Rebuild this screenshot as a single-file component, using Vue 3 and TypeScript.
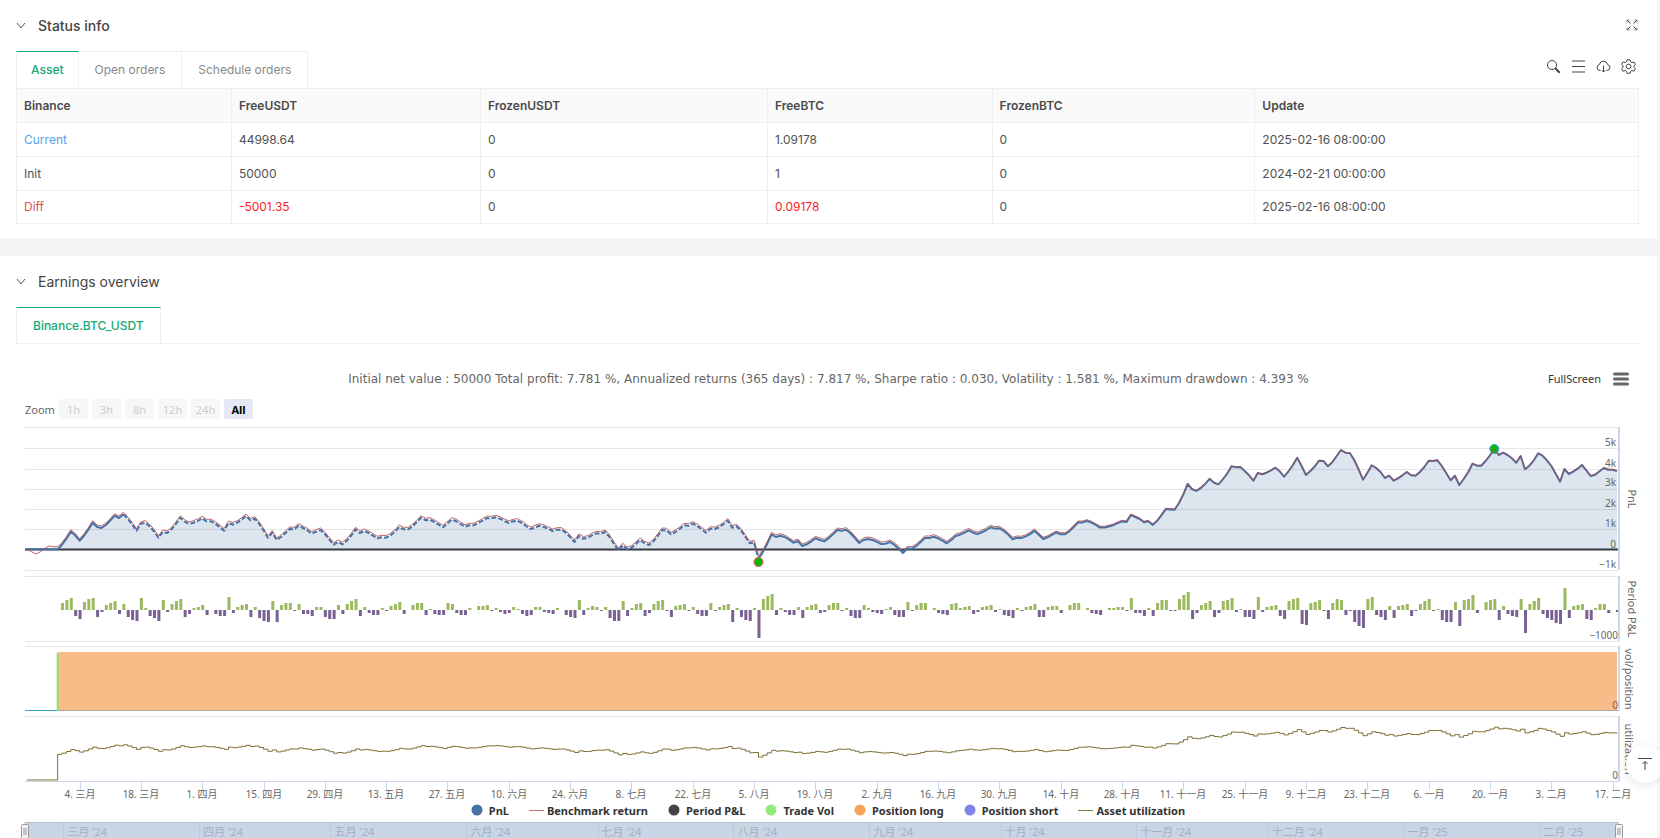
<script setup lang="ts">
import { computed, onBeforeUnmount, onMounted, ref } from 'vue'

interface Asset {
  name: string
  tone: string
  values: string[]
  changed: boolean
  update: string
}

const tabs = ['Asset', 'Open orders', 'Schedule orders']
const columns = ['Binance', 'FreeUSDT', 'FrozenUSDT', 'FreeBTC', 'FrozenBTC', 'Update']
const assets: Asset[] = [
  { name: 'Current', tone: 'current', values: ['44998.64', '0', '1.09178', '0'], changed: false, update: '2025-02-16 08:00:00' },
  { name: 'Init', tone: 'init', values: ['50000', '0', '1', '0'], changed: false, update: '2024-02-21 00:00:00' },
  { name: 'Diff', tone: 'diff', values: ['-5001.35', '0', '0.09178', '0'], changed: true, update: '2025-02-16 08:00:00' },
]

const ranges = ['1h', '3h', '8h', '12h', '24h', 'All']
const activeRange = ref('All')

const legend = [
  { label: 'PnL', shape: 'dot', color: '#4572a7' },
  { label: 'Benchmark return', shape: 'line', color: '#c07877' },
  { label: 'Period P&L', shape: 'dot', color: '#434348' },
  { label: 'Trade Vol', shape: 'dot', color: '#90ed7d' },
  { label: 'Position long', shape: 'dot', color: '#f7a35c' },
  { label: 'Position short', shape: 'dot', color: '#8085e9' },
  { label: 'Asset utilization', shape: 'line', color: '#857945' },
]

const dateLabels = [
  '4. 三月', '18. 三月', '1. 四月', '15. 四月', '29. 四月', '13. 五月', '27. 五月', '10. 六月', '24. 六月',
  '8. 七月', '22. 七月', '5. 八月', '19. 八月', '2. 九月', '16. 九月', '30. 九月', '14. 十月', '28. 十月',
  '11. 十一月', '25. 十一月', '9. 十二月', '23. 十二月', '6. 一月', '20. 一月', '3. 二月', '17. 二月',
]
const months = [
  { day: 9, label: "三月 '24" }, { day: 40, label: "四月 '24" }, { day: 70, label: "五月 '24" },
  { day: 101, label: "六月 '24" }, { day: 131, label: "七月 '24" }, { day: 162, label: "八月 '24" },
  { day: 193, label: "九月 '24" }, { day: 223, label: "十月 '24" }, { day: 254, label: "十一月 '24" },
  { day: 284, label: "十二月 '24" }, { day: 315, label: "一月 '25" }, { day: 346, label: "二月 '25" },
]

// Daily benchmark depth below the top of the plot, three units per pixel.
const levels: number[] = [
  388, 395, 402, 396, 386, 378, 380, 380, 368, 350, 329, 340, 356, 342, 323, 302, 315, 318, 309, 296,
  281, 288, 277, 290, 307, 326, 305, 302, 313, 328, 347, 330, 333, 322, 306, 287, 299, 306, 302, 297,
  289, 298, 298, 305, 315, 326, 303, 308, 302, 293, 282, 295, 290, 305, 325, 347, 332, 354, 345, 333,
  321, 322, 311, 318, 325, 335, 329, 324, 336, 352, 368, 360, 367, 356, 341, 322, 333, 327, 333, 341,
  349, 346, 347, 340, 329, 315,
  322, 322, 313, 300, 287, 295, 293, 300, 308, 316, 304, 293, 298, 306, 314, 310, 310, 303, 296, 288,
  289, 286, 290, 297, 303, 298, 296, 303, 313, 321, 316, 311, 315, 320, 327, 323, 323, 332, 345, 360,
  342, 350, 347, 340, 334, 335, 330, 345, 365, 385, 370, 381, 377, 366, 354, 364, 369, 358, 342, 324,
  325, 337, 330, 321, 310, 311, 305, 312, 322, 332, 320, 321, 316, 307, 296, 317, 313, 326, 344, 364,
  361, 410, 390, 365, 337, 345, 341, 345, 353, 362, 357,
  372, 367, 359, 349, 354, 358, 349, 337, 324, 326, 323, 334, 348, 363, 354, 351, 354, 359, 366, 365,
  360, 368, 380, 393, 379, 380, 372, 360, 348, 348, 344, 349, 356, 364, 354, 342, 338, 332, 325, 332,
  336, 331, 324, 316, 320, 319, 327, 338, 352, 348, 349, 344, 337, 327, 339, 352, 347, 340, 333, 338,
  338, 329, 316, 303, 303, 299, 304, 311, 319, 319, 316, 312, 306, 301, 303, 282, 288, 294, 304, 301,
  312, 300, 283, 265, 266, 267, 247, 221, 190, 206, 211, 202, 190, 175, 187, 192,
  177, 160, 138, 141, 140, 152, 165, 181, 158, 162, 157, 150, 142, 153, 169, 153, 134, 112, 137, 164,
  152, 138, 121, 122, 138, 126, 107, 89, 97, 98, 119, 147, 178, 158, 135, 143, 155, 173, 166, 181,
  174, 165, 155, 165, 166, 155, 140, 121, 122, 120, 137, 158, 180, 166, 194, 176, 156, 130, 136, 136,
  122, 105, 86, 104, 97, 104, 114, 127, 107, 147, 136, 120, 99, 106, 120, 137, 160, 184, 146, 161,
  154, 145, 134, 150, 167, 163, 153, 143, 148, 148, 152,
]
const ZERO = 388
const ENTRY_DAY = 7
const LAST_DAY = levels.length - 1
const lowDay = levels.indexOf(Math.max(...levels))
const highDay = levels.indexOf(Math.min(...levels.slice(320)), 320)

const chart = ref<HTMLElement | null>(null)
const width = ref(1657)
let observer: ResizeObserver | undefined
onMounted(() => {
  observer = new ResizeObserver(([entry]) => { width.value = entry.contentRect.width })
  if (chart.value) observer.observe(chart.value)
})
onBeforeUnmount(() => observer?.disconnect())

const left = 25
const right = computed(() => width.value - 38)
const xAt = (day: number): number => left + 2 + ((right.value - left - 4) * day) / LAST_DAY
const strategy = (day: number): number => {
  if (day <= ENTRY_DAY) return ZERO
  const lag = day < 220 ? 6 : Math.max(1, 6 - (day - 220) / 11)
  return levels[day] + lag
}
const trace = (from: number, to: number, value: (day: number) => number): string => {
  let path = ''
  for (let day = from; day <= to; day++) {
    path += `${day === from ? 'M' : 'L'}${xAt(day).toFixed(1)} ${(value(day) / 3).toFixed(1)}`
  }
  return path
}
const benchmarkPath = computed(() => trace(0, LAST_DAY, (d) => levels[d]))
const pnlSolid = computed(() => trace(0, 22, strategy) + trace(lowDay, LAST_DAY, strategy))
const pnlDashed = computed(() => trace(22, lowDay, strategy))
const areaPath = computed(() => `${trace(ENTRY_DAY, LAST_DAY, strategy)}V129H${xAt(ENTRY_DAY)}Z`)
const bars = computed(() =>
  levels.slice(ENTRY_DAY + 1).map((level, i) => {
    const day = i + ENTRY_DAY + 1
    const size = Math.round(((levels[day - 1] - level) * 17) / 30)
    return { x: xAt(day) - 1, y: size > 0 ? 190 - size : 190, height: Math.abs(size), gain: size > 0 }
  }),
)
const utilizationPath = computed(() => {
  let path = `M${xAt(0)} 360H${xAt(ENTRY_DAY)}`
  for (let day = ENTRY_DAY; day <= LAST_DAY; day++) {
    path += `V${((898 + 0.276 * levels[day]) / 3).toFixed(1)}H${xAt(Math.min(day + 1, LAST_DAY)).toFixed(1)}`
  }
  return path
})
const ticks = computed(() => dateLabels.map((label, i) => ({ label, x: Math.round(xAt(12 + i * 14)) })))
const gridRows = [7, 28, 49, 69, 89, 109, 150]
const pnlScale = [
  { label: '5k', y: 26 }, { label: '4k', y: 47 }, { label: '3k', y: 66 }, { label: '2k', y: 87 },
  { label: '1k', y: 107 }, { label: '0', y: 128 }, { label: '−1k', y: 148 },
]
const frames = [{ y: 7, h: 143 }, { y: 156, h: 65 }, { y: 226, h: 65 }, { y: 296, h: 65 }]
const axisTitles = [
  { label: 'PnL', x: 9, y: 79 }, { label: 'Period P&L', x: 9, y: 189 },
  { label: 'vol/position', x: 6, y: 259 }, { label: 'utilization', x: 6, y: 329 },
]
</script>

<template>
  <main class="shell">
    <section class="card">
      <header class="card-head">
        <button class="chevron" type="button" aria-label="Collapse status info">
          <svg width="10" height="8" viewBox="0 0 10 8"><path d="M1 1l4 5 4-5" /></svg>
        </button>
        <h2 class="strong">Status info</h2>
        <button class="shrink" type="button" aria-label="Exit full screen">
          <svg width="12" height="12" viewBox="0 0 12 12">
            <path d="M1 1l3.5 3.5M11 1L7.500 4.500M1 11l3.500-3.500M11 11L7.500 7.500" />
            <path d="M1 3.500V1h2.500M8.500 1H11v2.500M1 8.500V11h2.500M8.500 11H11V8.500" class="faint" />
          </svg>
        </button>
      </header>

      <div class="tab-row">
        <nav class="tabs">
          <button v-for="(tab, i) in tabs" :key="tab" type="button" class="tab" :class="{ active: i === 0 }">{{ tab }}</button>
        </nav>
        <div class="tools">
          <button type="button" aria-label="Search">
            <svg width="15" height="15" viewBox="0 0 15 15"><circle cx="6" cy="6" r="4.500" /><path d="M9.300 9.300l4.400 4.400" class="bold" /></svg>
          </button>
          <button type="button" aria-label="Columns">
            <svg width="15" height="15" viewBox="0 0 15 15"><path d="M1 2h13M1 7.500h13M1 13h13" /></svg>
          </button>
          <button type="button" aria-label="Download">
            <svg width="15" height="15" viewBox="0 0 15 15">
              <path d="M4.500 11.500H4A3 3 0 0 1 3.300 5.600a4.300 4.300 0 0 1 8.400 0A3 3 0 0 1 11 11.500h-.5M7.500 6.500v6.500M5.800 11.300l1.700 1.700 1.700-1.700" />
            </svg>
          </button>
          <button type="button" aria-label="Settings">
            <svg width="15" height="15" viewBox="0 0 15 15">
              <path d="M6 .8h3l.5 2 1.400.8 2-.7 1.500 2.600-1.500 1.400v1.300l1.500 1.400-1.500 2.600-2-.7-1.400.8-.5 2H6l-.5-2-1.400-.8-2 .7L.6 9.600l1.500-1.400V6.900L.6 5.500l1.500-2.600 2 .7 1.400-.8z" stroke-linejoin="round" />
              <circle cx="7.500" cy="7.500" r="2.300" />
            </svg>
          </button>
        </div>
      </div>

      <table class="assets">
        <colgroup><col v-for="c in columns" :key="c" :class="`col-${c.toLowerCase()}`" /></colgroup>
        <thead>
          <tr><th v-for="c in columns" :key="c" scope="col">{{ c }}</th></tr>
        </thead>
        <tbody>
          <tr v-for="row in assets" :key="row.name">
            <td :class="row.tone">{{ row.name }}</td>
            <td v-for="(v, i) in row.values" :key="i" :class="{ changed: row.changed && v !== '0' }">{{ v }}</td>
            <td>{{ row.update }}</td>
          </tr>
        </tbody>
      </table>
    </section>

    <section class="card earnings">
      <header class="card-head">
        <button class="chevron" type="button" aria-label="Collapse earnings overview">
          <svg width="10" height="8" viewBox="0 0 10 8"><path d="M1 1l4 5 4-5" /></svg>
        </button>
        <h2>Earnings overview</h2>
      </header>
      <div class="tab-row lined">
        <nav class="tabs"><button type="button" class="tab active">Binance.BTC_USDT</button></nav>
      </div>

      <div ref="chart" class="chart">
        <div class="summary">
          <p>Initial net value : 50000 Total profit: 7.781 %, Annualized returns (365 days) : 7.817 %, Sharpe ratio : 0.030, Volatility : 1.581 %, Maximum drawdown : 4.393 %</p>
          <div class="chart-menu">
            <button type="button">FullScreen</button>
            <button type="button" aria-label="Chart menu">
              <svg width="16" height="14" viewBox="0 0 16 14"><path d="M1.500 2h13M1.500 7h13M1.500 12h13" class="menu" /></svg>
            </button>
          </div>
        </div>
        <div class="ranges">
          <span>Zoom</span>
          <button v-for="r in ranges" :key="r" type="button" :class="{ active: r === activeRange }" :disabled="r !== 'All'" @click="activeRange = r">{{ r }}</button>
        </div>

        <svg class="plot" :width="width" height="380" role="img" aria-label="Earnings chart">
          <g class="grid">
            <path v-for="y in gridRows" :key="y" :d="`M${left} ${y + 0.5}H${right}`" />
            <path v-for="y in [156, 221, 226, 296]" :key="y" :d="`M${left} ${y + 0.5}H${right}`" />
          </g>
          <path class="area" :d="areaPath" />
          <path class="zero" :d="`M${left} 129.500H${right}`" />
          <path class="pnl" :d="pnlSolid" />
          <path class="pnl dashed" :d="pnlDashed" />
          <circle class="low" :cx="xAt(lowDay)" cy="142" r="4.500" />
          <circle class="high" :cx="xAt(highDay)" cy="29" r="4.500" />
          <path class="benchmark" :d="benchmarkPath" />

          <rect v-for="(b, i) in bars" :key="i" :class="b.gain ? 'gain' : 'loss'" :x="b.x" :y="b.y" width="3" :height="b.height" />

          <path class="vol-base" :d="`M${left} 290.500H${right}`" />
          <rect class="long" :x="xAt(ENTRY_DAY)" y="232" :width="xAt(LAST_DAY) - xAt(ENTRY_DAY)" height="59" />
          <path class="long-base" :d="`M${xAt(ENTRY_DAY)} 290.500H${xAt(LAST_DAY)}`" />
          <path class="trade" :d="`M${xAt(ENTRY_DAY)} 233V291`" />

          <path class="axis" :d="`M${left} 361.500H${right}`" />
          <path v-for="f in frames" :key="f.y" class="axis side" :d="`M${right} ${f.y}v${f.h}`" />
          <path class="utilization" :d="utilizationPath" />

          <g class="scale">
            <text v-for="s in pnlScale" :key="s.label" :x="right - 3" :y="s.y">{{ s.label }}</text>
            <text :x="right - 1" y="219">−1000</text>
            <text :x="right - 1" y="289">0</text>
            <text :x="right - 1" y="359">0</text>
          </g>
          <g class="dates">
            <template v-for="t in ticks" :key="t.label">
              <path class="axis" :d="`M${t.x + 0.5} 362v8`" />
              <text :x="t.x" y="378">{{ t.label }}</text>
            </template>
          </g>
          <text v-for="t in axisTitles" :key="t.label" class="axis-title" :transform="`translate(${right + t.x} ${t.y}) rotate(90)`">{{ t.label }}</text>
        </svg>

        <div class="legend">
          <button v-for="l in legend" :key="l.label" type="button">
            <svg width="18" height="12" viewBox="0 0 18 12">
              <circle v-if="l.shape === 'dot'" cx="6" cy="6" r="5.500" :fill="l.color" />
              <path v-else d="M0 6.500h15" :stroke="l.color" />
            </svg>
            <span>{{ l.label }}</span>
          </button>
        </div>

        <svg class="navigator" :width="width" height="40" role="img" aria-label="Date range navigator">
          <rect class="mask" :x="left" y="0" :width="right - left" height="40" />
          <path class="nav-top" :d="`M${left - 1} .5H${right}`" />
          <g v-for="m in months" :key="m.label">
            <path class="nav-grid" :d="`M${Math.round(xAt(m.day - 0.5)) - 0.5} 1V40`" />
            <text :x="xAt(m.day - 0.5) + 3" y="14">{{ m.label }}</text>
          </g>
          <g v-for="x in [left - 4, right - 4]" :key="x" class="handle">
            <rect :x="x + 0.5" y="2.500" width="7" height="14" rx="1" />
            <path :d="`M${x + 3} 6v7M${x + 5} 6v7`" />
          </g>
        </svg>
      </div>
    </section>

    <button class="back-top" type="button" aria-label="Back to top">
      <svg width="14" height="14" viewBox="0 0 14 14"><path d="M0 1.500h14M7 4.500V13M4.500 7L7 4.500 9.500 7" /></svg>
    </button>
  </main>
</template>

<style>
body { margin: 0; background: #f4f5f7; }
</style>

<style scoped>
.shell {
  display: flex; flex-direction: column; gap: 18px;
  height: 100vh; overflow: hidden; box-sizing: border-box; padding-right: 3px;
  background: #f4f5f7; color: #505050;
  font-family: Inter, "Liberation Sans", "Noto Sans CJK SC", sans-serif; font-size: 12px;
}
button { appearance: none; border: 0; padding: 0; background: none; font: inherit; color: inherit; cursor: pointer; }
svg { display: block; fill: none; }
.card { background: #fff; flex: none; }
.card-head { display: flex; align-items: center; height: 51px; padding: 0 19px 0 16px; }
.card-head h2 { margin: 0 auto 0 12px; font-size: 14px; line-height: 20px; font-weight: 400; color: #444; }
.card-head h2.strong { font-weight: 500; }
.chevron svg { stroke: #555; }
.shrink { padding-bottom: 2px; }
.shrink svg { stroke: #333; }
.shrink .faint { stroke: #888; }
.tab-row { display: flex; justify-content: space-between; padding: 0 18px 0 16px; }
.lined { position: relative; }
.lined::after { content: ""; position: absolute; left: 16px; right: 18px; bottom: 0; height: 1px; background: #efefef; }
.tabs { display: flex; }
.tab {
  height: 37px; padding: 0 16px; border: 1px solid #efefef; border-left-width: 0; border-bottom-width: 0;
  color: #8a8a8a; line-height: 36px;
}
.tab:first-child { border-left-width: 1px; padding: 0 14px; }
.lined .tab:first-child { padding: 0 16px; }
.tab.active { color: #12aa78; font-weight: 500; border-top-color: #12aa78; }
.tools { display: flex; gap: 10px; padding: 8px 3px 0 0; height: 15px; }
.tools svg { stroke: #444; }
.tools .bold { stroke-width: 2; }
.assets { width: calc(100% - 34px); margin: 0 18px 0 16px; border-collapse: collapse; table-layout: fixed; }
.card:first-child { padding-bottom: 14px; }
.assets th, .assets td { padding: 0 7px 1px; border: 1px solid #efefef; text-align: left; box-sizing: border-box; }
.assets tr { height: 34px; }
.assets tr:last-child { height: 33px; }
.assets thead tr:last-child { height: 34px; }
.assets th { background: #fafafa; font-weight: 600; color: #4a4a4a; }
.assets .current { color: #5c9fe8; }
.assets .diff { color: #d9534f; }
.assets .changed { color: #f81d22; }
.col-binance { width: 13.25%; }
.col-freeusdt { width: 15.35%; }
.col-frozenusdt { width: 17.7%; }
.col-freebtc { width: 13.85%; }
.col-frozenbtc { width: 16.2%; }

.chart { font-family: "Noto Sans", "Noto Sans CJK SC", sans-serif; font-size: 11px; color: #666; }
.summary { display: grid; align-items: center; height: 55px; padding: 14px 28px 0; box-sizing: border-box; }
.summary > * { grid-area: 1 / 1; }
.summary p { margin: 0; font: 12px/16px "DejaVu Sans", sans-serif; text-align: center; }
.chart-menu { display: flex; gap: 12px; justify-self: end; align-items: center; color: #333; }
.menu { stroke: #666; stroke-width: 3; stroke-linecap: round; }
.ranges { display: flex; gap: 4px; align-items: center; height: 20px; margin-bottom: 1px; padding-left: 25px; }
.ranges span { width: 30px; }
.ranges button { width: 29px; height: 20px; border-radius: 2px; background: #f7f7f7; color: #ccc; }
.ranges button.active { background: #e6e9f5; color: #000; font-weight: 700; }
.grid path { stroke: #e6e6e6; }
.area { fill: #4572a7; fill-opacity: .18; }
.zero { stroke: #333a42; stroke-width: 2; }
.pnl { stroke: #4572a7; stroke-width: 2; stroke-linejoin: round; }
.dashed { stroke-dasharray: 5 2; }
.benchmark { stroke: #b34a4a; stroke-opacity: .85; }
.low, .high { fill: #08b808; stroke-width: 1; }
.low { stroke: #ff4a4a; }
.high { stroke: #3aa3ee; }
.gain { fill: #9bb95f; }
.loss { fill: #796193; }
.vol-base { stroke: #3d9fcd; }
.long { fill: #f9bb87; }
.long-base { stroke: #b0a79a; }
.trade { stroke: #8fe07a; stroke-width: 2; }
.axis { stroke: #ccd6eb; }
.side { stroke-width: 2; }
.utilization { stroke: #7c6f34; }
svg text { fill: #666; font-size: 10px; }
.scale text { text-anchor: end; }
.dates text, svg .axis-title { text-anchor: middle; }
svg .axis-title { font-size: 11px; }
.legend { display: flex; justify-content: center; gap: 20px; height: 20px; padding: 0 1px 2px 0; color: #333; font-weight: 700; }
.legend button { display: flex; align-items: center; height: 20px; }
.mask { fill: #c8d5e5; }
.nav-top { stroke: #b8bec6; }
.nav-grid { stroke: #bccbdc; }
.navigator text { fill: #a3b0c2; font-size: 11px; }
.handle rect { fill: #f2f2f2; stroke: #999; }
.handle path { stroke: #999; }
.back-top {
  position: fixed; right: -4px; bottom: 55px; width: 38px; height: 38px; border-radius: 50%;
  display: flex; align-items: center; justify-content: center; background: #fff; box-shadow: 0 2px 8px rgba(0, 0, 0, .1);
}
.back-top svg { stroke: #444; }
</style>
